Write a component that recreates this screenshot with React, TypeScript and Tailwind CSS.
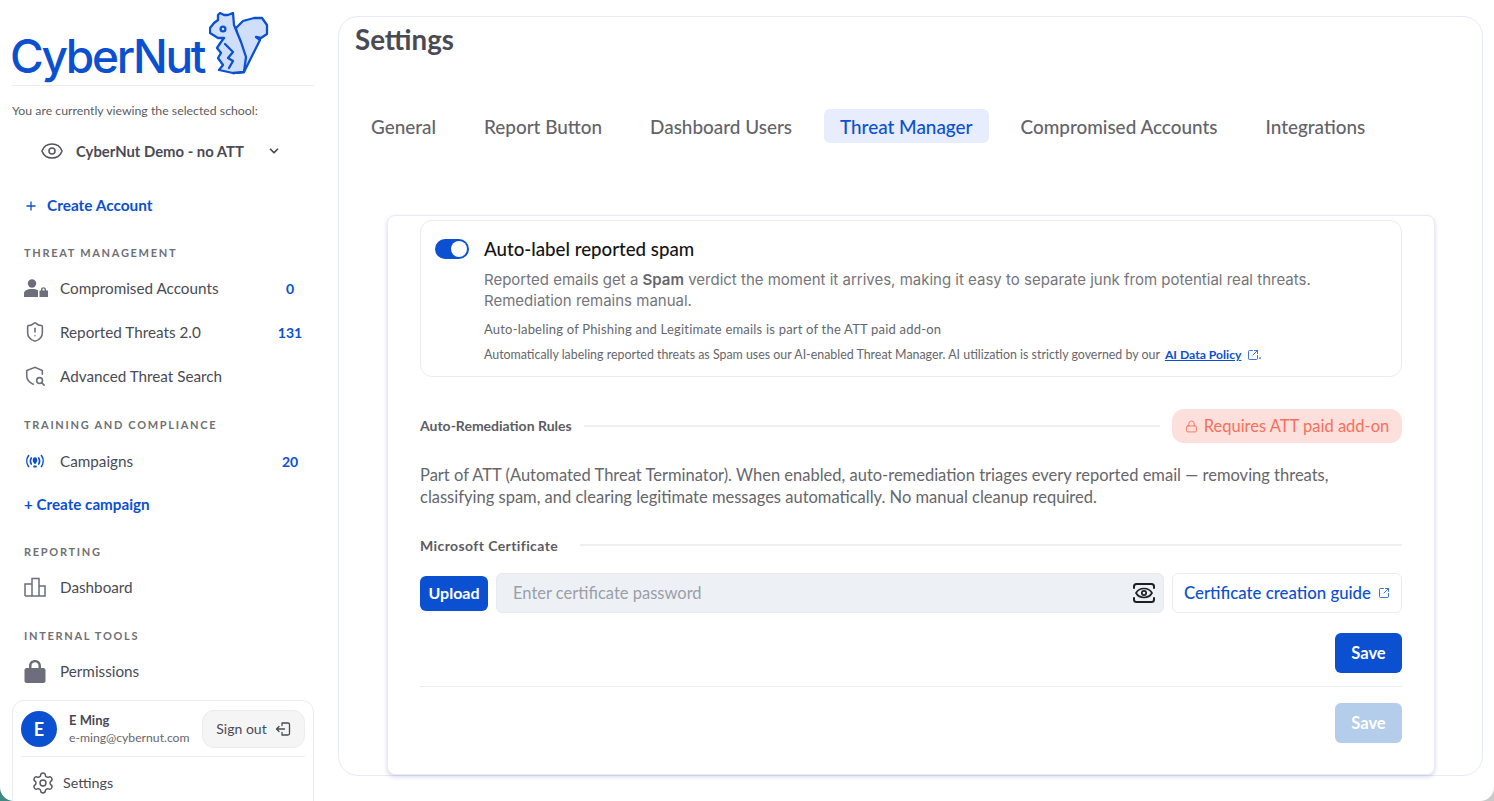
import * as React from "react";
import { ChevronDown, Eye, Lock, Plus, Settings, ShieldAlert, SquareArrowOutUpRight } from "lucide-react";

const ui = "font-['Lato',sans-serif]";

function Squirrel() {
	return (
		<svg viewBox="8 7 60 63" className="h-[63px] w-[60px] shrink-0" fill="#cfdffb" stroke="#0b50d0" strokeWidth="2.3" strokeLinejoin="round" strokeLinecap="round">
			<path d="M36 30 L35 23 L42 16 L53 13 L61 13 L66 20 L66 29 L60 33 L55 32 L59 35 L55 43 L43 67 L32 68 Z" />
			<path d="M17 15 L17 10 L19 8 L23 10 L27 10 L32 8 L33 20 L40 37 L45 52 L43 67 L32 68 L18 65 L22 60 L17 53 L20 48 L16 43 L20 37 L23 33 L17 33 L9 28 L9 23 L13 18 Z" />
			<path d="M24 39 L32 47 L27 53 L32 56 L28 63" fill="none" />
			<circle cx="22" cy="24" r="2.4" fill="#cfdffb" />
		</svg>
	);
}

function UserLockIcon() {
	return (
		<svg viewBox="0 0 24 18" className="h-[18px] w-6" fill="#6d6d7b">
			<circle cx="8" cy="4.5" r="4.2" />
			<path d="M0 18 V14.5 C0 11.5 3 10 8 10 C10.5 10 12.5 10.4 14 11.2 V18 Z" />
			<path d="M15.5 18 V11.5 H17 V10.5 C17 7.5 22 7.5 22 10.5 V11.5 H24 V18 Z M18.5 11.5 H20.5 V10.5 C20.5 9.3 18.5 9.3 18.5 10.5 Z" fillRule="evenodd" />
		</svg>
	);
}

function ShieldSearchIcon() {
	return (
		<svg viewBox="0 0 24 24" className="h-[22px] w-[22px]" fill="none" stroke="#6d6d7b" strokeWidth="1.7" strokeLinecap="round">
			<path d="M20 10 V6 L12 2.5 L3 6 V12 C3 16 6 19 10 21" />
			<circle cx="17" cy="17" r="3.2" />
			<path d="M19.5 19.5 L22 22" />
		</svg>
	);
}

function CampaignIcon() {
	return (
		<svg viewBox="0 0 24 24" className="h-[22px] w-[22px]" fill="none" stroke="#0b50d0" strokeWidth="1.7" strokeLinecap="round">
			<path d="M5 6 C2.5 9.5 2.5 14.5 5 18 M19 6 C21.5 9.5 21.5 14.5 19 18 M8 8.5 C6.6 10.8 6.6 13.2 8 15.5 M16 8.5 C17.4 10.8 17.4 13.2 16 15.5" />
			<path d="M12 8 C10 8 9.5 10 9.5 11.5 C9.5 13 11 14 11 15 H13 C13 14 14.5 13 14.5 11.5 C14.5 10 14 8 12 8 Z" fill="#0b50d0" stroke="none" />
			<path d="M11 18 H13" strokeWidth="2" />
		</svg>
	);
}

function BarsIcon() {
	return (
		<svg viewBox="0 0 22 20" className="h-5 w-[22px]" fill="none" stroke="#6d6d7b" strokeWidth="1.5">
			<path d="M1 19 H21 V9 H15 V19 M15 19 V1.5 H8 V19 M8 19 V7 H1 V19" />
		</svg>
	);
}

function SolidLockIcon() {
	return (
		<svg viewBox="0 0 22 24" className="h-6 w-[22px]" fill="#6d6d7b">
			<path d="M2.5 9 H5 V7 C5 -1 17 -1 17 7 V9 H19.5 C20.5 9 21.5 10 21.5 11 V22 C21.5 23 20.5 24 19.5 24 H2.5 C1.5 24 .5 23 .5 22 V11 C.5 10 1.5 9 2.5 9 Z M7.5 9 H14.5 V7 C14.5 2 7.5 2 7.5 7 Z" fillRule="evenodd" />
		</svg>
	);
}

function SignOutIcon() {
	return (
		<svg viewBox="0 0 16 14" className="h-[14px] w-4" fill="none" stroke="#4a4a55" strokeWidth="1.3" strokeLinecap="round" strokeLinejoin="round">
			<path d="M7 1 H13 C13.8 1 14.5 1.7 14.5 2.5 V11.5 C14.5 12.3 13.8 13 13 13 H7 M7 1 V3.5 M7 13 V10.5" />
			<path d="M9.5 7 H1.5 M4 4.5 L1.5 7 L4 9.5" />
		</svg>
	);
}

function PasswordEyeIcon() {
	return (
		<svg viewBox="0 0 22 20" className="h-5 w-[22px]" fill="none" stroke="#1d1f24" strokeWidth="2" strokeLinecap="round" strokeLinejoin="round">
			<path d="M1 5 V3.5 C1 2 2 1 3.5 1 H18.5 C20 1 21 2 21 3.5 V5 M1 15 V16.5 C1 18 2 19 3.5 19 H18.5 C20 19 21 18 21 16.5 V15" />
			<path d="M3 10 C5 6.5 8 5.5 11 5.5 C14 5.5 17 6.5 19 10 C17 13.5 14 14.5 11 14.5 C8 14.5 5 13.5 3 10 Z" strokeWidth="1.7" />
			<circle cx="11" cy="10" r="2.2" strokeWidth="1.7" />
		</svg>
	);
}

function SectionLabel({ children, className }: { children: React.ReactNode; className: string }) {
	return (
		<div className={`pl-6 text-[11px] leading-4 font-bold tracking-[1.7px] text-[#6f6f76] ${className}`}>
			{children}
		</div>
	);
}

function NavRow({ icon, label, count }: { icon: React.ReactNode; label: string; count?: string }) {
	return (
		<div className="flex h-11 items-center pl-6 pr-[30px]">
			<div className="flex w-9 justify-start">{icon}</div>
			<span className="flex-1 text-[15.25px] text-[#4a4a55]">{label}</span>
			{count && <span className="w-9 text-center text-[14px] font-bold text-[#0b50d0]">{count}</span>}
		</div>
	);
}

function Sidebar() {
	return (
		<aside className="flex w-[338px] shrink-0 flex-col overflow-hidden">
			<div className="ml-3 mr-6 flex h-[86px] items-start border-b border-[#ececee] pt-[12px]">
				<span className="-ml-0.5 mr-0.5 mt-[14px] w-[197px] shrink-0 font-['Inter',sans-serif] text-[46px] leading-[60px] font-medium tracking-[-2.3px] whitespace-nowrap text-[#0b50d0]">CyberNut</span>
				<Squirrel />
			</div>
			<p className="mt-[17px] pl-3 text-[12.3px] leading-4 text-[#5c5c62]">You are currently viewing the selected school:</p>
			<div className="mt-[20px] flex h-6 items-center pl-10">
				<Eye className="h-6 w-6 text-[#55555c]" strokeWidth={1.5} />
				<span className="ml-[12px] w-[191px] text-[14.85px] font-bold text-[#4a4a55]">CyberNut Demo - no ATT</span>
				<ChevronDown className="h-3.5 w-3.5 text-[#4a4a55]" strokeWidth={3} />
			</div>
			<div className="mt-[33px] flex h-[20px] items-center pl-6 text-[15.4px] font-bold text-[#0b50d0]">
				<Plus className="mr-[9px] h-[14px] w-[14px]" strokeWidth={2.2} />
				Create Account
			</div>
			<SectionLabel className="mt-[29px]">THREAT MANAGEMENT</SectionLabel>
			<div className="mt-[5px]">
				<NavRow icon={<UserLockIcon />} label="Compromised Accounts" count="0" />
				<NavRow icon={<ShieldAlert className="h-[22px] w-[22px] text-[#6d6d7b]" strokeWidth={1.7} />} label="Reported Threats 2.0" count="131" />
				<NavRow icon={<ShieldSearchIcon />} label="Advanced Threat Search" />
			</div>
			<SectionLabel className="mt-[19px]">TRAINING AND COMPLIANCE</SectionLabel>
			<div className="mt-[6px]">
				<NavRow icon={<CampaignIcon />} label="Campaigns" count="20" />
			</div>
			<div className="mt-[11px] h-[20px] pl-6 text-[15.2px] leading-5 font-bold text-[#0b50d0]">+ Create campaign</div>
			<SectionLabel className="mt-[30px]">REPORTING</SectionLabel>
			<div className="mt-[5px]">
				<NavRow icon={<BarsIcon />} label="Dashboard" />
			</div>
			<SectionLabel className="mt-[19px]">INTERNAL TOOLS</SectionLabel>
			<div className="mt-[5px]">
				<NavRow icon={<SolidLockIcon />} label="Permissions" />
			</div>
			<div className="ml-3 mr-6 mt-[7px] h-[110px] rounded-t-xl border border-[#ececee] px-2">
				<div className="flex h-[56px] items-center border-b border-[#ececee]">
					<div className="flex h-9 w-9 items-center justify-center rounded-full bg-[#0b50d0] text-lg font-bold text-white">E</div>
					<div className="ml-3 w-[133px]">
						<div className="text-[13px] leading-[17px] font-bold text-[#4a4a55]">E Ming</div>
						<div className="text-[12.2px] leading-[17px] text-[#66666c]">e-ming@cybernut.com</div>
					</div>
					<div className="flex h-[38px] w-[103px] items-center justify-center gap-2 rounded-xl border border-[#ececee] bg-[#f5f5f6] text-[14px] text-[#4a4a55]">
						Sign out
						<SignOutIcon />
					</div>
				</div>
				<div className="flex h-[52px] items-center pl-[10px] text-[14.3px] text-[#4a4a55]">
					<Settings className="mr-2 h-6 w-6 text-[#55555c]" strokeWidth={1.4} />
					Settings
				</div>
			</div>
		</aside>
	);
}

function Tab({ label, active }: { label: string; active?: boolean }) {
	return (
		<div className={`flex h-[34px] items-center rounded-md px-4 pt-0.5 text-[18.9px] font-medium whitespace-nowrap ${active ? "bg-[#e7edfc] text-[#0b50d0]" : "text-[#63636a]"}`}>
			{label}
		</div>
	);
}

function SaveButton({ disabled }: { disabled?: boolean }) {
	return (
		<div className={`flex h-10 w-[67px] items-center justify-center rounded-md text-[16.5px] font-bold text-white ${disabled ? "bg-[#b3cdeb]" : "bg-[#0b50d0]"}`}>
			Save
		</div>
	);
}

function ThreatCard() {
	return (
		<div className="ml-[48px] mr-[47px] flex-1 rounded-lg border border-[#e8ebf7] bg-white px-8 pt-1 shadow-[0_2px_4px_rgba(60,70,140,0.2)]">
			<div className="h-[157px] rounded-xl border border-[#ececf0] pl-[14px] pt-[16px]">
				<div className="flex items-center">
					<div className="flex h-5 w-[34px] items-center justify-end rounded-full bg-[#0b50d0] pr-[2px]">
						<div className="h-4 w-4 rounded-full bg-white" />
					</div>
					<span className="ml-[15px] text-[18.7px] leading-6 font-medium text-[#141416]">Auto-label reported spam</span>
				</div>
				<div className="ml-[49px] mr-[70px] mt-2">
					<p className="font-['Inter',sans-serif] text-[15px] leading-[21px] text-[#75757b]">
						Reported emails get a <b className="font-semibold text-[#66666c]">Spam</b> verdict the moment it arrives, making it easy to separate junk from potential real threats. Remediation remains manual.
					</p>
					<p className="mt-[10px] text-[13px] leading-4 tracking-[0.2px] whitespace-nowrap text-[#66666c]">Auto-labeling of Phishing and Legitimate emails is part of the ATT paid add-on</p>
					<p className="mt-[10px] flex items-center text-[12.4px] leading-4 whitespace-nowrap text-[#66666c]">
						Automatically labeling reported threats as Spam uses our AI-enabled Threat Manager. AI utilization is strictly governed by our&nbsp;
						<span className="ml-0.5 text-[12.2px] font-bold text-[#0b50d0] underline">AI Data Policy</span>
						<SquareArrowOutUpRight className="ml-[5px] h-3 w-3 text-[#0b50d0]" strokeWidth={1.6} />.
					</p>
				</div>
			</div>

			<div className="mt-8 flex h-[34px] items-center">
				<span className="pb-0.5 text-[14px] font-bold whitespace-nowrap text-[#5c5c62]">Auto-Remediation Rules</span>
				<div className="mx-3 h-0.5 flex-1 bg-[#efeff1]" />
				<div className="flex h-[34px] w-[230px] items-center justify-center gap-[6px] rounded-xl bg-[#fde0dc] text-[16.5px] text-[#f4705c]">
					<Lock className="h-[13px] w-[13px]" strokeWidth={1.7} />
					Requires ATT paid add-on
				</div>
			</div>
			<p className="mt-[21px] pr-10 text-[16.5px] leading-[22px] text-[#66666c]">
				Part of ATT (Automated Threat Terminator). When enabled, auto-remediation triages every reported email — removing threats, classifying spam, and clearing legitimate messages automatically. No manual cleanup required.
			</p>

			<div className="mt-[27px] flex h-[20px] items-center">
				<span className="text-[14px] font-bold tracking-[0.4px] whitespace-nowrap text-[#5c5c62]">Microsoft Certificate</span>
				<div className="ml-[22px] h-0.5 flex-1 bg-[#efeff1]" />
			</div>
			<div className="mt-[18px] flex h-10 items-center">
				<div className="flex h-[35px] w-[68px] items-center justify-center rounded-md bg-[#0b50d0] text-base font-bold text-white">Upload</div>
				<div className="ml-2 flex h-10 flex-1 items-center justify-between rounded-md border border-[#e6ebf2] bg-[#edf1f6] pl-4 pr-2 text-[16.5px] text-[#9a9fa8]">
					Enter certificate password
					<PasswordEyeIcon />
				</div>
				<div className="ml-2 flex h-10 w-[230px] items-center justify-center gap-[7px] rounded-md border border-[#ececf0] text-[16.8px] font-medium text-[#0b50d0]">
					Certificate creation guide
					<SquareArrowOutUpRight className="h-3 w-3" strokeWidth={1.6} />
				</div>
			</div>
			<div className="mt-5 flex justify-end">
				<SaveButton />
			</div>
			<div className="mt-[13px] h-px bg-[#ececf2]" />
			<div className="mt-4 flex justify-end">
				<SaveButton disabled />
			</div>
		</div>
	);
}

export default function App() {
	return (
		<div className="h-[801px] w-[1494px] overflow-hidden bg-[linear-gradient(90deg,#3f8a82,#c9c9c9)]">
			<div className={`flex h-[801px] w-[1494px] rounded-b-[14px] bg-white ${ui}`}>
				<Sidebar />
				<main className="mb-[25px] mr-[11px] mt-4 flex flex-1 flex-col rounded-[20px] border border-[#e6eafb]">
					<h1 className="ml-4 mt-[5px] text-[27.7px] leading-9 font-bold text-[#4a4a55]">Settings</h1>
					<div className="ml-4 mt-[51px] flex gap-4">
						<Tab label="General" />
						<Tab label="Report Button" />
						<Tab label="Dashboard Users" />
						<Tab label="Threat Manager" active />
						<Tab label="Compromised Accounts" />
						<Tab label="Integrations" />
					</div>
					<div className="mt-[72px] flex flex-1 flex-col">
						<ThreatCard />
					</div>
				</main>
			</div>
		</div>
	);
}
